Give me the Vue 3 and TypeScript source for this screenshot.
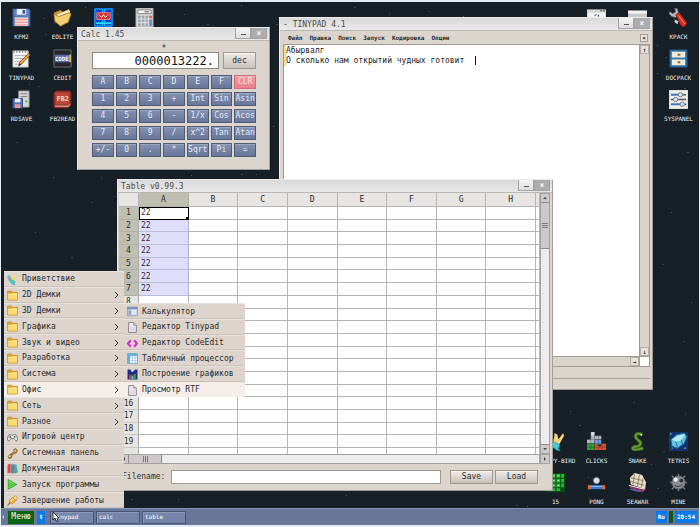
<script setup lang="ts">
import { ref } from 'vue'

interface Shortcut {
  label: string
  icon: string
}

interface MenuEntry {
  label: string
  icon: string
  sub?: boolean
}

const icons: Record<string, string> = {
  floppy:
    '<path d="M1 1h17l1 1v17H1z" fill="#5c83bd" stroke="#31507f"/><path d="M5 1h10v6H5z" fill="#eef1f6"/><path d="M11 2h3v4h-3z" fill="#3c5f98"/><path d="M3 10h14v9H3z" fill="#f5d4d4"/><path d="M3 12h14M3 15h14M3 18h14" stroke="#e08f8f"/>',
  folderBig:
    '<path d="M1 5l7-3 2 2 7-3 1 10-9 8-7-4z" fill="#c99a3c"/><path d="M4 7l13-5 1 2-3 11-8 4z" fill="#fff3cf"/><path d="M1 6l5 3 11-4 2 1-3 9-8 4-6-5z" fill="#f2cf74" stroke="#a87a26"/>',
  shell:
    '<path d="M0 0h20v20H0z" fill="#0a3fd0"/><path d="M1 1h8v18H1zM11 1h8v18h-8z" fill="none" stroke="#19c8f0"/><path d="M3 5h14v7H3z" fill="#c92a2a" stroke="#ff8a8a"/><path d="M5 7l3 3 2-3 2 3 3-3" stroke="#fff" fill="none"/><path d="M2 15h16v2H2z" fill="#24dff5"/>',
  calcBig:
    '<path d="M1 0h18v20H1z" fill="#e2e2e0" stroke="#9a9a98"/><path d="M3 2h14v4H3z" fill="#fafafa" stroke="#777"/><path d="M10 4h5" stroke="#555"/><path d="M3 8h3v3H3zM7 8h3v3H7zM11 8h3v3h-3zM3 12h3v3H3zM7 12h3v3H7zM11 12h3v3h-3zM3 16h3v3H3zM7 16h3v3H7zM11 16h3v3h-3z" fill="#a2a6ab"/><path d="M15 8h3v3h-3z" fill="#d66"/><path d="M15 12h3v7h-3z" fill="#6b93bd"/>',
  notepad:
    '<path d="M1 2h16v17H1z" fill="#f4f4f2" stroke="#b7b7b7"/><path d="M2 1v3M5 1v3M8 1v3M11 1v3M14 1v3" stroke="#777"/><path d="M3 7h12M3 10h10M3 13h8M3 16h6" stroke="#aaa9c9"/><path d="M19 6l-9 10-3 2 1-4 9-9z" fill="#f0a33a" stroke="#9c5a1c"/><path d="M7 18l1-3 2 1z" fill="#333"/>',
  code:
    '<path d="M1 1h18v18H1z" fill="#24262b" stroke="#6e6e6e"/><path d="M2 6h15v8H2z" fill="#6065b4"/><path d="M17 6h2v8h-2z" fill="#e1c33f"/><text x="2" y="13" font-family="DejaVu Sans Mono" font-size="6" font-weight="bold" fill="#fff">CODE</text>',
  rdsave:
    '<path d="M7 1h11v17H7z" fill="#d7d9d6" stroke="#8b8e8c"/><path d="M9 4h7M9 7h7" stroke="#777"/><path d="M14 11h2v2h-2z" fill="#44a04a"/><path d="M1 9h10v10H1z" fill="#4e74b3" stroke="#2f4d82"/><path d="M3 9h6v4H3z" fill="#eee"/><path d="M3 15h6v4H3z" fill="#e89a9a"/>',
  fb2:
    '<path d="M3 1h15l1 1v14l-3 3H2l-1-2V3z" fill="#a2362b" stroke="#6f1f18"/><path d="M3 3h14v12H3z" fill="#b9473a"/><path d="M2 17h14l2-2" stroke="#e9c8b8" fill="none"/><text x="4" y="12" font-family="DejaVu Sans Mono" font-size="7" font-weight="bold" fill="#f7e4dd">FB2</text>',
  windowDoc:
    '<path d="M0 2h20v17H0z" fill="#f2f2f2" stroke="#bbb"/><path d="M0 2h20v3H0z" fill="#d7d7d7"/><path d="M14 3h2M17 3h2" stroke="#333"/><path d="M8 8l2-1M12 7v2" stroke="#222"/>',
  windowGrey:
    '<path d="M0 3h20v16H0z" fill="#c9c9c9" stroke="#aaa"/><path d="M0 3h20v3H0z" fill="#f2f2f2"/>',
  wrench:
    '<path d="M1 4l3 2 3-2-1-4 3 1 1 5-3 4-4-1-3-3z" fill="#b5bcc2" stroke="#5a6066" stroke-width=".6"/><path d="M7 7l4-2 8 11-3 4-3-1z" fill="#d92f22" stroke="#861710" stroke-width=".8"/><path d="M10 8l7 9" stroke="#ff8a74"/><path d="M6 12l4 2-1 3-3-2z" fill="#cfd4d8"/>',
  cabinet:
    '<path d="M1 1h18v18H1z" fill="#3279ad" stroke="#235b86"/><path d="M3 3h14v6H3zM3 11h14v6H3z" fill="#f4ecdb"/><path d="M9 6h3M9 14h3" stroke="#8a6b3c" stroke-width="2"/>',
  sliders:
    '<path d="M0 0h20v20H0z" fill="#efeeeb" stroke="#c9c8c4"/><path d="M2 5h9M2 15h12" stroke="#3c78b8" stroke-width="2"/><path d="M11 5h7M2 10h3M9 10h9M14 15h4" stroke="#5c5248" stroke-width="1.5"/><circle cx="12" cy="5" r="2.3" fill="#d5dde6" stroke="#71808f"/><circle cx="7" cy="10" r="2.3" fill="#d5dde6" stroke="#71808f"/><circle cx="14" cy="15" r="2.3" fill="#d5dde6" stroke="#71808f"/>',
  bird:
    '<path d="M8 12L1 4l1-3 6 6z" fill="#41c7d8"/><path d="M8 12l1-11 3 2 1 5 5-7 1 3-5 9z" fill="#f2d671"/><path d="M3 9l7 2 5 3-2 3 2 3-4-1-4-3-3-4z" fill="#3fcad6" stroke="#21808c" stroke-width=".6"/><path d="M1 6l4 4" stroke="#ec8a2a" stroke-width="2"/>',
  clicks:
    '<path d="M4 0h4v6H4z" fill="#dcdcdc"/><path d="M4 6h4v6H0V8h4zM8 4h7v4H8z" fill="#b5b9bf"/><path d="M8 8h7v5H8z" fill="#6f9bdf"/><path d="M0 12h8v7H0z" fill="#28a32c"/><path d="M8 13h4v6H8zM15 12h5v7h-8v-4h3z" fill="#d9512c"/><path d="M4 0v19M8 4v15M12 4v15M16 12v7M0 8h15M0 12h20M0 16h20M4 4h11" stroke="#20262b" stroke-width=".3"/>',
  snake:
    '<path d="M15 3c-5-3-9 0-6 4 3 3 6 4 3 7-2 2-7 1-7 3s5 2 11 0" fill="none" stroke="#2c5d1d" stroke-width="4"/><path d="M15 3c-5-3-9 0-6 4 3 3 6 4 3 7-2 2-7 1-7 3s5 2 11 0" fill="none" stroke="#6b9c33" stroke-width="2"/><circle cx="14" cy="3" r="1" fill="#e7f29a"/>',
  tetris:
    '<path d="M0 0h20v20H0z" fill="#16336f"/><path d="M2 8l6-5 8-2 3 4-3 7-7 5-6-2z" fill="#5fc4e4" stroke="#1b5f8c"/><path d="M3 8l6-4 8-2-4 7-6 1z" fill="#b7ecf7"/><path d="M7 10l2 6M13 8l1 5" stroke="#246f9c"/><path d="M1 2h2M16 17h2M3 17h1" stroke="#9cb9ff"/>',
  fifteen:
    '<path d="M0 0h20v20H0z" fill="#0c4b14"/><path d="M1 1h4v4H1zM6 1h4v4H6zM11 1h4v4h-4zM16 1h3v4h-3zM1 6h4v4H1zM6 6h4v4H6zM11 6h4v4h-4zM16 6h3v4h-3zM1 11h4v4H1zM6 11h4v4H6zM11 11h4v4h-4zM16 11h3v4h-3zM1 16h4v3H1zM6 16h4v3H6zM11 16h4v3h-4z" fill="#2bb537"/><path d="M2 3h2M7 3h2M12 3h2M2 8h2M7 8h2M12 8h2M2 13h2M7 13h2M12 13h2" stroke="#b7f5a6"/>',
  pong:
    '<circle cx="10" cy="8" r="3.2" fill="#dfe3e6" stroke="#8f969b" stroke-width=".7"/><path d="M1 13h18v4H1z" fill="#2b7fe0"/><path d="M1 13h3v4H1zM16 13h3v4h-3z" fill="#e56d2b"/><path d="M4 14h12" stroke="#9ccbff"/>',
  seawar:
    '<path d="M2 5l5-5 8 2 4 8-1 7-6-2-9-3z" fill="#e9dcc6"/><path d="M3 5l13 3M3 9l14 4M7 1L5 12M12 2l-2 12M16 5l-2 10" stroke="#7b6756" stroke-width=".8"/><path d="M0 13l9 2 10 2-3 3-10-1z" fill="#8c3a5c"/><path d="M1 13l16 4" stroke="#f2f2ff"/><path d="M2 17l12 3" stroke="#4169d8"/>',
  mine:
    '<path d="M10 1v18M1 10h18M3 3l14 14M17 3L3 17" stroke="#777c80" stroke-width="1.5"/><circle cx="10" cy="10" r="7" fill="#8a8d8f" stroke="#5d6063"/><circle cx="7" cy="7" r="2.2" fill="#f0f0f0"/><circle cx="13" cy="8" r="2" fill="#303335"/><path d="M6 13q4 3 8-1" stroke="#333" fill="none"/>',
  folder:
    '<path d="M1 4V2h7l2 2h9v14H1z" fill="#e0a82f" stroke="#b27c17"/><path d="M1 6h8l2-1h8v13H1z" fill="#fbdc72" stroke="#c89325"/><path d="M2 8h16" stroke="#fff0ac"/>',
  gamepad:
    '<path d="M4 5h4l1 1h2l1-1h4c3 3 4 10 2 11s-3-1-5-4H7c-2 3-3 5-5 4S1 8 4 5z" fill="#efefec" stroke="#555" stroke-width="1.4"/><path d="M4 9h4M6 7v4" stroke="#444" stroke-width="1.4"/><circle cx="14" cy="9" r="1.6" fill="#555"/>',
  wrenchTool:
    '<path d="M2 15l4-4 3-1 4-4-1-3 4-2 3 4-2 4-4 1-4 4-1 4-4 2z" fill="#b17b3c" stroke="#6c4318"/><circle cx="15" cy="5" r="2" fill="#e5c28b"/><circle cx="5" cy="15" r="2" fill="#e5c28b"/>',
  books:
    '<path d="M1 3l5-2v16l-5 2z" fill="#d8474c"/><path d="M5 3l5-2v16l-5 2z" fill="#e47b83"/><path d="M9 3l4-1 1 16-5 1z" fill="#31a5a5"/><path d="M13 3l4-1 3 15-5 2z" fill="#3eb8b2"/><path d="M5 3v15M9 3v16M13 3l2 16" stroke="#7b3a52" stroke-width=".8"/>',
  play: '<path d="M2 1l16 9L2 19z" fill="#4fce45" stroke="#23921f"/><path d="M4 4l9 6" stroke="#a6f093"/>',
  plug:
    '<path d="M1 19l5-6" stroke="#a86b1c" stroke-width="2"/><path d="M4 11l6-7 6 6-6 6-4-1z" fill="#f6b73c" stroke="#a86b1c"/><path d="M11 5l4-4 4 4-3 5z" fill="#ffe28b" stroke="#a86b1c"/><path d="M7 11l4-4" stroke="#fff2b8" stroke-width="2"/>',
  calcSmall:
    '<path d="M1 2h18v16H1z" fill="#c8d0dc" stroke="#6c7d98"/><path d="M1 2h18v4H1z" fill="#7890b4"/><path d="M3 8h4v8H3z" fill="#8ea2c0"/><path d="M9 8h8M9 11h8M9 14h8" stroke="#f4f6fa" stroke-width="2"/>',
  page: '<path d="M3 1h9l5 5v13H3z" fill="#eceaf0" stroke="#7d7883" stroke-width="1.6"/><path d="M12 1v5h5" fill="#cac6d0" stroke="#7d7883"/><path d="M5 9h9v8H5z" fill="#dcd9e2"/>',
  angles:
    '<path d="M7 4l-5 6 5 6M13 4l5 6-5 6" fill="none" stroke="#d432cf" stroke-width="4"/>',
  grid: '<path d="M1 1h18v18H1z" fill="#fff" stroke="#2f7fae"/><path d="M1 1h18v4H1zM1 1h4v18H1z" fill="#63b5dd"/><path d="M1 9h18M1 14h18M10 1v18M15 1v18M5 1v18M1 5h18" stroke="#4a9bc8" stroke-width=".7"/>',
  chart:
    '<path d="M1 1h5l3 5 3-2 3-3h4v18H1z" fill="#1d2a86"/><path d="M4 10h4v9H4z" fill="#e23a2d"/><path d="M8 12h4v7H8z" fill="#3cc1e0"/><path d="M12 9h4v10h-4z" fill="#35a437"/>',
}

const leftIcons: Shortcut[] = [
  { label: 'KFM2', icon: 'floppy' },
  { label: 'EOLITE', icon: 'folderBig' },
  { label: '', icon: 'shell' },
  { label: '', icon: 'calcBig' },
  { label: 'TINYPAD', icon: 'notepad' },
  { label: 'CEDIT', icon: 'code' },
  { label: '', icon: '' },
  { label: '', icon: '' },
  { label: 'RDSAVE', icon: 'rdsave' },
  { label: 'FB2READ', icon: 'fb2' },
]

const rightIcons: Shortcut[] = [
  { label: '', icon: 'windowDoc' },
  { label: '', icon: 'windowGrey' },
  { label: 'KPACK', icon: 'wrench' },
  { label: '', icon: '' },
  { label: '', icon: '' },
  { label: 'DOCPACK', icon: 'cabinet' },
  { label: '', icon: '' },
  { label: '', icon: '' },
  { label: 'SYSPANEL', icon: 'sliders' },
]

const gameIcons: Shortcut[] = [
  { label: 'FLAPPY-BIRD', icon: 'bird' },
  { label: 'CLICKS', icon: 'clicks' },
  { label: 'SNAKE', icon: 'snake' },
  { label: 'TETRIS', icon: 'tetris' },
  { label: '15', icon: 'fifteen' },
  { label: 'PONG', icon: 'pong' },
  { label: 'SEAWAR', icon: 'seawar' },
  { label: 'MINE', icon: 'mine' },
]

// x, y and extra width of each star
const stars: number[][] = [
  [42, 16, 1], [84, 5, 0], [116, 12, 1], [37, 84, 1], [28, 82, 0], [44, 32, 1], [183, 12, 0],
  [206, 22, 1], [275, 22, 1], [353, 5, 1], [388, 11, 0], [427, 9, 1], [462, 14, 0], [272, 124, 0],
  [240, 3, 0], [683, 86, 1], [656, 43, 0], [664, 55, 1], [656, 71, 0], [686, 150, 1], [670, 210, 0],
  [661, 262, 1], [690, 300, 0], [682, 339, 1], [632, 400, 1], [569, 409, 0], [578, 423, 1], [684, 411, 0],
  [662, 449, 1], [15, 140, 1], [52, 175, 0], [90, 200, 1], [34, 230, 0], [70, 255, 1], [100, 176, 0],
  [190, 173, 0], [240, 172, 1], [255, 172, 0], [130, 497, 1], [177, 497, 0], [345, 493, 0], [433, 507, 1],
  [449, 506, 0], [515, 503, 1], [526, 504, 0], [656, 486, 1], [587, 475, 0], [650, 462, 0],
]

const keys: string[] = [
  'A', 'B', 'C', 'D', 'E', 'F', 'CLR',
  '1', '2', '3', '+', 'Int', 'Sin', 'Asin',
  '4', '5', '6', '-', '1/x', 'Cos', 'Acos',
  '7', '8', '9', '/', 'x^2', 'Tan', 'Atan',
  '+/-', '0', '.', '*', 'Sqrt', 'Pi', '=',
]

const padMenus: string[] = ['Файл', 'Правка', 'Поиск', 'Запуск', 'Кодировка', 'Опции']
const columns: string[] = ['A', 'B', 'C', 'D', 'E', 'F', 'G', 'H']

const mainMenu: MenuEntry[] = [
  { label: 'Приветствие', icon: 'bird' },
  { label: '2D Демки', icon: 'folder', sub: true },
  { label: '3D Демки', icon: 'folder', sub: true },
  { label: 'Графика', icon: 'folder', sub: true },
  { label: 'Звук и видео', icon: 'folder', sub: true },
  { label: 'Разработка', icon: 'folder', sub: true },
  { label: 'Система', icon: 'folder', sub: true },
  { label: 'Офис', icon: 'folder', sub: true },
  { label: 'Сеть', icon: 'folder', sub: true },
  { label: 'Разное', icon: 'folder', sub: true },
  { label: 'Игровой центр', icon: 'gamepad' },
  { label: 'Системная панель', icon: 'wrenchTool' },
  { label: 'Документация', icon: 'books' },
  { label: 'Запуск программы', icon: 'play' },
  { label: 'Завершение работы', icon: 'plug' },
]

const officeMenu: MenuEntry[] = [
  { label: 'Калькулятор', icon: 'calcSmall' },
  { label: 'Редактор Tinypad', icon: 'page' },
  { label: 'Редактор CodeEdit', icon: 'angles' },
  { label: 'Табличный процессор', icon: 'grid' },
  { label: 'Построение графиков', icon: 'chart' },
  { label: 'Просмотр RTF', icon: 'page' },
]

const tasks: string[] = ['tinypad', 'calc', 'table']

const display = ref('0000013222.')
const note = ref('Абырвалг\nО сколько нам открытий чудных готовит')
const filename = ref('')
const openMenu = ref('Офис')
const activeOffice = ref('Просмотр RTF')
</script>

<template>
  <div class="screen">
    <main class="desktop">
      <svg class="stars" aria-hidden="true">
        <rect
          v-for="(s, i) in stars"
          :key="i"
          :x="s[0]"
          :y="s[1]"
          :width="1 + s[2]"
          height="1"
          :fill="s[2] ? '#3a444c' : '#4c565e'"
        />
      </svg>

      <div class="icon-band">
        <div class="icons four">
          <div v-for="(s, i) in leftIcons" :key="i" class="shortcut">
            <svg v-if="s.icon" viewBox="0 0 20 20" v-html="icons[s.icon]"></svg>
            <span>{{ s.label }}</span>
          </div>
        </div>
        <div class="icons three">
          <div v-for="(s, i) in rightIcons" :key="i" class="shortcut">
            <svg v-if="s.icon" viewBox="0 0 20 20" v-html="icons[s.icon]"></svg>
            <span>{{ s.label }}</span>
          </div>
        </div>
      </div>
      <div class="icon-band end">
        <div class="icons four">
          <div v-for="(s, i) in gameIcons" :key="i" class="shortcut">
            <svg viewBox="0 0 20 20" v-html="icons[s.icon]"></svg>
            <span>{{ s.label }}</span>
          </div>
        </div>
      </div>

      <section class="window pad">
        <header class="titlebar">
          <h2>- TINYPAD 4.1</h2>
          <div class="win-buttons">
            <button type="button" aria-label="Свернуть"><i class="dash"></i></button>
            <button type="button" class="close" aria-label="Закрыть">×</button>
          </div>
        </header>
        <nav class="pad-menu">
          <button v-for="m in padMenus" :key="m" type="button">{{ m }}</button>
          <button type="button" class="tab-close" aria-label="Закрыть файл">×</button>
        </nav>
        <div class="pad-body">
          <div class="editor">
            <i class="mark"></i>
            <textarea v-model="note" aria-label="Текст" spellcheck="false"></textarea>
            <i class="caret"></i>
          </div>
          <div class="pad-vscroll">
            <button type="button" aria-label="Вверх">↑</button>
            <button type="button" aria-label="Вниз">↓</button>
          </div>
          <div class="pad-hscroll">
            <button type="button" aria-label="Вправо">→</button>
          </div>
          <div class="pad-corner"></div>
        </div>
        <footer class="pad-status"></footer>
      </section>

      <section class="window calc">
        <header class="titlebar">
          <h2>Calc 1.45</h2>
          <div class="win-buttons">
            <button type="button" aria-label="Свернуть"><i class="dash"></i></button>
            <button type="button" class="close" aria-label="Закрыть">×</button>
          </div>
        </header>
        <div class="calc-body">
          <output class="operation">*</output>
          <div class="readout">
            <input v-model="display" type="text" readonly aria-label="Результат" />
            <button type="button" class="soft">dec</button>
          </div>
          <div class="keys">
            <button v-for="k in keys" :key="k" type="button" :class="{ clear: k === 'CLR' }">{{ k }}</button>
          </div>
        </div>
      </section>

      <section class="window sheet">
        <header class="titlebar">
          <h2>Table v0.99.3</h2>
          <div class="win-buttons">
            <button type="button" aria-label="Свернуть"><i class="dash"></i></button>
            <button type="button" class="close" aria-label="Закрыть">×</button>
          </div>
        </header>
        <div class="sheet-body">
          <div class="cells">
            <table>
              <colgroup>
                <col class="num-col" />
                <col v-for="c in columns" :key="c" />
                <col class="rest-col" />
              </colgroup>
              <thead>
                <tr>
                  <th></th>
                  <th v-for="c in columns" :key="c" :class="{ picked: c === 'A' }">{{ c }}</th>
                  <th></th>
                </tr>
              </thead>
              <tbody>
                <tr v-for="r in 20" :key="r">
                  <th :class="{ picked: r <= 7 }">{{ r < 20 ? r : '' }}</th>
                  <td
                    v-for="c in columns"
                    :key="c"
                    :class="{ range: c === 'A' && r <= 7 && r > 1, current: c === 'A' && r === 1 }"
                  >{{ c === 'A' && r <= 7 ? '22' : '' }}</td>
                  <td></td>
                </tr>
              </tbody>
            </table>
          </div>
          <div class="vscroll">
            <button type="button" aria-label="Вверх"><i class="tri up"></i></button>
            <div class="thumb"><i class="grip"></i></div>
            <button type="button" class="last" aria-label="Вниз"><i class="tri down"></i></button>
          </div>
          <div class="hscroll">
            <button type="button" aria-label="Влево"><i class="tri left"></i></button>
            <div class="thumb"><i class="grip"></i></div>
          </div>
          <div class="hscroll-end">
            <button type="button" aria-label="Вправо"><i class="tri right"></i></button>
          </div>
        </div>
        <form class="file-row" @submit.prevent>
          <label for="filename">Filename:</label>
          <input id="filename" v-model="filename" type="text" />
          <button type="button" class="soft">Save</button>
          <button type="button" class="soft">Load</button>
        </form>
      </section>

      <nav class="menu main-menu">
        <div v-for="m in mainMenu" :key="m.label" class="entry">
          <button type="button" :class="{ active: m.label === openMenu }">
            <svg viewBox="0 0 20 20" v-html="icons[m.icon]"></svg>
            <span>{{ m.label }}</span>
            <svg v-if="m.sub" class="chevron" viewBox="0 0 5 8"><path d="M1 1l3 3-3 3" /></svg>
          </button>
          <div v-if="m.label === openMenu" class="menu sub-menu">
            <div v-for="o in officeMenu" :key="o.label" class="entry">
              <button type="button" :class="{ active: o.label === activeOffice }">
                <svg viewBox="0 0 20 20" v-html="icons[o.icon]"></svg>
                <span>{{ o.label }}</span>
              </button>
            </div>
          </div>
        </div>
      </nav>
    </main>

    <footer class="taskbar">
      <i class="tri left pale"></i>
      <button type="button" class="start">Меню</button>
      <button type="button" class="updown" aria-label="Окна">↕</button>
      <div class="tasks">
        <button v-for="t in tasks" :key="t" type="button">{{ t }}</button>
      </div>
      <button type="button" class="tray">Ru</button>
      <i class="cpu"></i>
      <time class="tray clock">20:54</time>
    </footer>

    <svg class="cursor" viewBox="0 0 8 11" aria-hidden="true">
      <path d="M1 1v8l2-2 1 3h2L5 7h2z" fill="#fff" stroke="#111" stroke-width=".8" />
    </svg>
  </div>
</template>

<style>
body {
  margin: 0;
}
</style>

<style scoped>
* {
  box-sizing: border-box;
}

.screen {
  position: relative;
  display: flex;
  flex-direction: column;
  min-height: 100vh;
  overflow: hidden;
  border: solid #e6edf0;
  border-width: 2px 1px;
  background: #182027;
  color: #2b2b2b;
  font: 8px/10px 'DejaVu Sans Mono', 'Liberation Mono', monospace;
}

button,
input,
textarea {
  margin: 0;
  padding: 0;
  border: 0;
  border-radius: 0;
  outline: 0;
  background: none;
  color: inherit;
  font: inherit;
}

h2 {
  margin: 0;
  font: inherit;
}

.desktop {
  position: relative;
  display: flex;
  flex: 1;
  flex-direction: column;
  justify-content: space-between;
  padding-top: 6px;
}

.stars {
  position: absolute;
  inset: 0;
  width: 100%;
  height: 100%;
}

.icon-band {
  display: flex;
  justify-content: space-between;
}

.icon-band.end {
  justify-content: flex-end;
}

.icons {
  display: grid;
  grid-auto-rows: 35px;
  gap: 6px 0;
  position: relative;
}

.icons.four {
  grid-template-columns: repeat(4, 41px);
}

.icons.three {
  grid-template-columns: repeat(3, 41px);
}

.shortcut {
  display: flex;
  flex-direction: column;
  align-items: center;
  gap: 5px;
  color: #eef0f2;
  font-size: 6px;
  line-height: 10px;
  white-space: nowrap;
}

.shortcut svg {
  width: 19px;
  height: 19px;
}

/* Windows */
.window {
  position: absolute;
  display: flex;
  flex-direction: column;
  border: 1px solid #c2beb9;
  border-color: #eceae8 #a29d98 #a29d98 #eceae8;
  background: #dcd5cd;
}

.titlebar {
  display: flex;
  justify-content: space-between;
  height: 13px;
  padding-left: 3px;
  border-bottom: 1px solid #bab8b5;
  background: linear-gradient(#dadada, #e8e8e8);
  color: #4b4b4b;
  line-height: 13px;
}

.win-buttons {
  display: flex;
  height: 11px;
  padding-right: 2px;
}

.win-buttons button {
  display: flex;
  align-items: center;
  justify-content: center;
  width: 16px;
  border: 1px solid #a4a4a4;
  border-top: 0;
  background: linear-gradient(#f4f4f4, #dcdcdc);
}

.win-buttons .close {
  background: #adadad;
  color: #f6f6f6;
  font-weight: bold;
}

.dash {
  width: 5px;
  height: 1px;
  margin-top: 3px;
  background: #555;
}

.soft {
  border: 1px solid #9f9892;
  background: linear-gradient(#efebe8, #c8c0bb);
  box-shadow: inset 0 1px #f8f6f4;
  text-align: center;
}

/* Calculator */
.calc {
  top: 25px;
  left: 76px;
  width: 193px;
}

.calc-body {
  display: flex;
  flex-direction: column;
  padding: 1px 13px 12px 14px;
}

.operation {
  align-self: center;
  height: 10px;
  padding-top: 2px;
  margin-right: 20px;
}

.readout {
  display: flex;
  gap: 4px;
  height: 17px;
}

.readout input {
  flex: 1;
  min-width: 0;
  padding-right: 4px;
  border: 1px solid #8e8a86;
  background: #fff;
  color: #111;
  font-size: 12px;
  text-align: right;
}

.readout .soft {
  width: 33px;
}

.keys {
  display: grid;
  grid-template-columns: repeat(7, minmax(0, 1fr));
  grid-auto-rows: 14px;
  gap: 3px 2px;
  padding-top: 6px;
}

.keys button {
  border: 1px solid #4f5b77;
  background: linear-gradient(#8592b0, #67759a);
  box-shadow: inset 0 1px #99a4be;
  color: #e4e9f4;
  text-align: center;
  line-height: 10px;
}

.keys .clear {
  border-color: #cd6f78;
  background: linear-gradient(#f3979d, #e9808a);
  box-shadow: inset 0 1px #f8b4b8;
  color: #ffe4e6;
}

/* Text editor */
.pad {
  top: 15px;
  left: 278px;
  width: 374px;
  height: 373px;
}

.pad-menu {
  display: flex;
  align-items: center;
  gap: 7px;
  height: 13px;
  padding: 0 4px 0 8px;
  font-size: 6px;
  font-weight: bold;
}

.pad-menu .tab-close {
  width: 8px;
  height: 8px;
  margin-left: auto;
  border: 1px solid #a29c96;
  background: #eae5e0;
  line-height: 6px;
}

.pad-body {
  display: grid;
  flex: 1;
  grid-template-columns: 1fr 10px;
  grid-template-rows: 1fr 10px;
  margin: 0 2px 0 3px;
  border: 1px solid #a19b95;
}

.editor {
  position: relative;
  display: flex;
  background: #fff;
}

.mark {
  width: 2px;
  height: 21px;
  background: #f0dc82;
}

.editor textarea {
  flex: 1;
  padding: 1px 1px 1px 0;
  color: #222;
  resize: none;
}

.caret {
  position: absolute;
  top: 11px;
  left: 191px;
  width: 1px;
  height: 9px;
  background: #111;
}

.pad-vscroll,
.pad-hscroll {
  display: flex;
  justify-content: space-between;
  background: #dad3cb;
}

.pad-vscroll {
  flex-direction: column;
  border-left: 1px solid #a19b95;
}

.pad-hscroll {
  justify-content: flex-end;
  border-top: 1px solid #a19b95;
}

.pad-vscroll button,
.pad-hscroll button {
  width: 9px;
  height: 9px;
  border: 1px solid #b5afa8;
  background: #e6e1db;
  font-size: 6px;
  font-weight: bold;
  line-height: 7px;
}

.pad-corner {
  border: solid #a19b95;
  border-width: 1px 0 0 1px;
  background: #fff;
}

.pad-status {
  height: 22px;
  margin: 0 2px;
  background: linear-gradient(#a9a39d, #a9a39d) 0 11px / 100% 1px no-repeat;
}

/* Spreadsheet */
.sheet {
  top: 177px;
  left: 116px;
  width: 436px;
}

.sheet-body {
  display: grid;
  grid-template-columns: 1fr 10px;
  grid-template-rows: 261px 10px;
  margin: 0 2px 0 1px;
}

.cells {
  overflow: hidden;
  background: #fff;
}

table {
  width: 100%;
  height: 268px;
  border-spacing: 0;
  table-layout: fixed;
}

thead tr {
  height: 14px;
}

tbody tr {
  height: 12px;
}

.num-col {
  width: 20px;
}

.rest-col {
  width: 4px;
}

th,
td {
  padding: 0;
  overflow: hidden;
  border: solid #b5b5b8;
  border-width: 0 1px 1px 0;
  line-height: 11px;
}

th {
  background: #e6e5e1;
  font-weight: normal;
  text-align: center;
}

tbody th {
  border-color: #c9c8c4;
  border-right-color: #a5a5a5;
}

th.picked {
  border-color: #b0b0a6;
  background: #bebeb3;
}

td {
  padding-left: 2px;
  text-align: left;
}

td.range {
  border-bottom-color: #bcbcdc;
  background: #dedefa;
}

td.current {
  border-color: #000;
  background: linear-gradient(#000, #000) 100% 100% / 2px 2px no-repeat;
  box-shadow: inset 1px 1px #000;
}

.vscroll,
.hscroll,
.hscroll-end {
  display: flex;
  border: 1px solid #a3a1a0;
  background: #ececec;
}

.vscroll {
  flex-direction: column;
}

.vscroll button,
.hscroll button,
.hscroll-end button {
  display: flex;
  align-items: center;
  justify-content: center;
  width: 8px;
  height: 8px;
  background: #cfcaca;
}

.vscroll .thumb,
.hscroll .thumb {
  display: flex;
  align-items: center;
  justify-content: center;
  background: #cec8cb;
}

.vscroll .thumb {
  height: 47px;
  border: solid #8f8b8c;
  border-width: 1px 0;
}

.hscroll .thumb {
  width: 34px;
  border: solid #8f8b8c;
  border-width: 0 1px;
}

.vscroll .grip {
  width: 6px;
  height: 5px;
  background: repeating-linear-gradient(#7d797a 0 1px, transparent 1px 2px);
}

.hscroll .grip {
  width: 5px;
  height: 6px;
  background: repeating-linear-gradient(90deg, #7d797a 0 1px, transparent 1px 2px);
}

.vscroll .last {
  margin-top: auto;
  height: 9px;
  border-top: 1px solid #8f8b8c;
}

.tri {
  width: 0;
  height: 0;
  border: 2px solid transparent;
}

.tri.up {
  border-top: 0;
  border-bottom-color: #444;
}

.tri.down {
  border-bottom: 0;
  border-top-color: #444;
}

.tri.left {
  border-left: 0;
  border-right-color: #444;
}

.tri.right {
  border-right: 0;
  border-left-color: #444;
}

.file-row {
  display: flex;
  align-items: center;
  padding: 6px 14px 6px 4px;
}

.file-row input {
  flex: 1;
  min-width: 0;
  height: 14px;
  margin: 0 9px 0 6px;
  padding: 0 2px;
  border: 1px solid #a09a94;
  background: #fff;
}

.file-row .soft {
  width: 43px;
  height: 14px;
}

.file-row .soft + .soft {
  margin-left: 2px;
}

/* Menus */
.menu {
  position: absolute;
  display: grid;
  grid-auto-rows: 1fr;
  background: #dcd4cd;
}

.main-menu {
  bottom: 0;
  left: 3px;
  width: 120px;
  height: 237px;
}

.sub-menu {
  bottom: 0;
  left: 100%;
  width: 121px;
  height: 94px;
}

.entry {
  position: relative;
  display: flex;
}

.entry button {
  display: flex;
  flex: 1;
  align-items: center;
  gap: 4px;
  padding: 1px 5px 0 3px;
  border-top: 1px solid #e8e2dd;
  border-bottom: 1px solid #cac2bb;
  text-align: left;
  white-space: nowrap;
}

.entry button svg {
  width: 11px;
  height: 11px;
}

.entry button.active {
  border-color: #f5ede7;
  background: #f5ede7;
}

.entry button .chevron {
  width: 5px;
  height: 8px;
  margin-left: auto;
  fill: none;
  stroke: #333;
}

/* Taskbar */
.taskbar {
  display: flex;
  align-items: center;
  height: 17px;
  padding: 0 2px 0 1px;
  border-top: 1px solid #8391b0;
  background: #687797;
  color: #fff;
}

.tri.pale {
  margin-right: 4px;
  border-right-color: #c4cde0;
}

.start {
  width: 26px;
  height: 13px;
  background: #0b6414;
}

.updown {
  width: 8px;
  height: 13px;
  margin: 0 5px 0 3px;
  background: #0a7be8;
  font-weight: bold;
}

.tasks {
  display: flex;
  flex: 1;
  gap: 2px;
}

.tasks button {
  width: 44px;
  height: 13px;
  padding-left: 2px;
  border: 1px solid #46557b;
  background: #7585a9;
  box-shadow: inset 1px 1px #8b99ba;
  font-size: 6px;
  text-align: left;
}

.tray {
  height: 12px;
  padding: 0 2px;
  background: #0a7be8;
  font-size: 6px;
  font-weight: bold;
  line-height: 12px;
}

.cpu {
  width: 4px;
  height: 12px;
  margin: 0 2px;
  background: #0d5a1b;
}

.cursor {
  position: absolute;
  bottom: 3px;
  left: 51px;
  width: 8px;
  height: 11px;
}
</style>
